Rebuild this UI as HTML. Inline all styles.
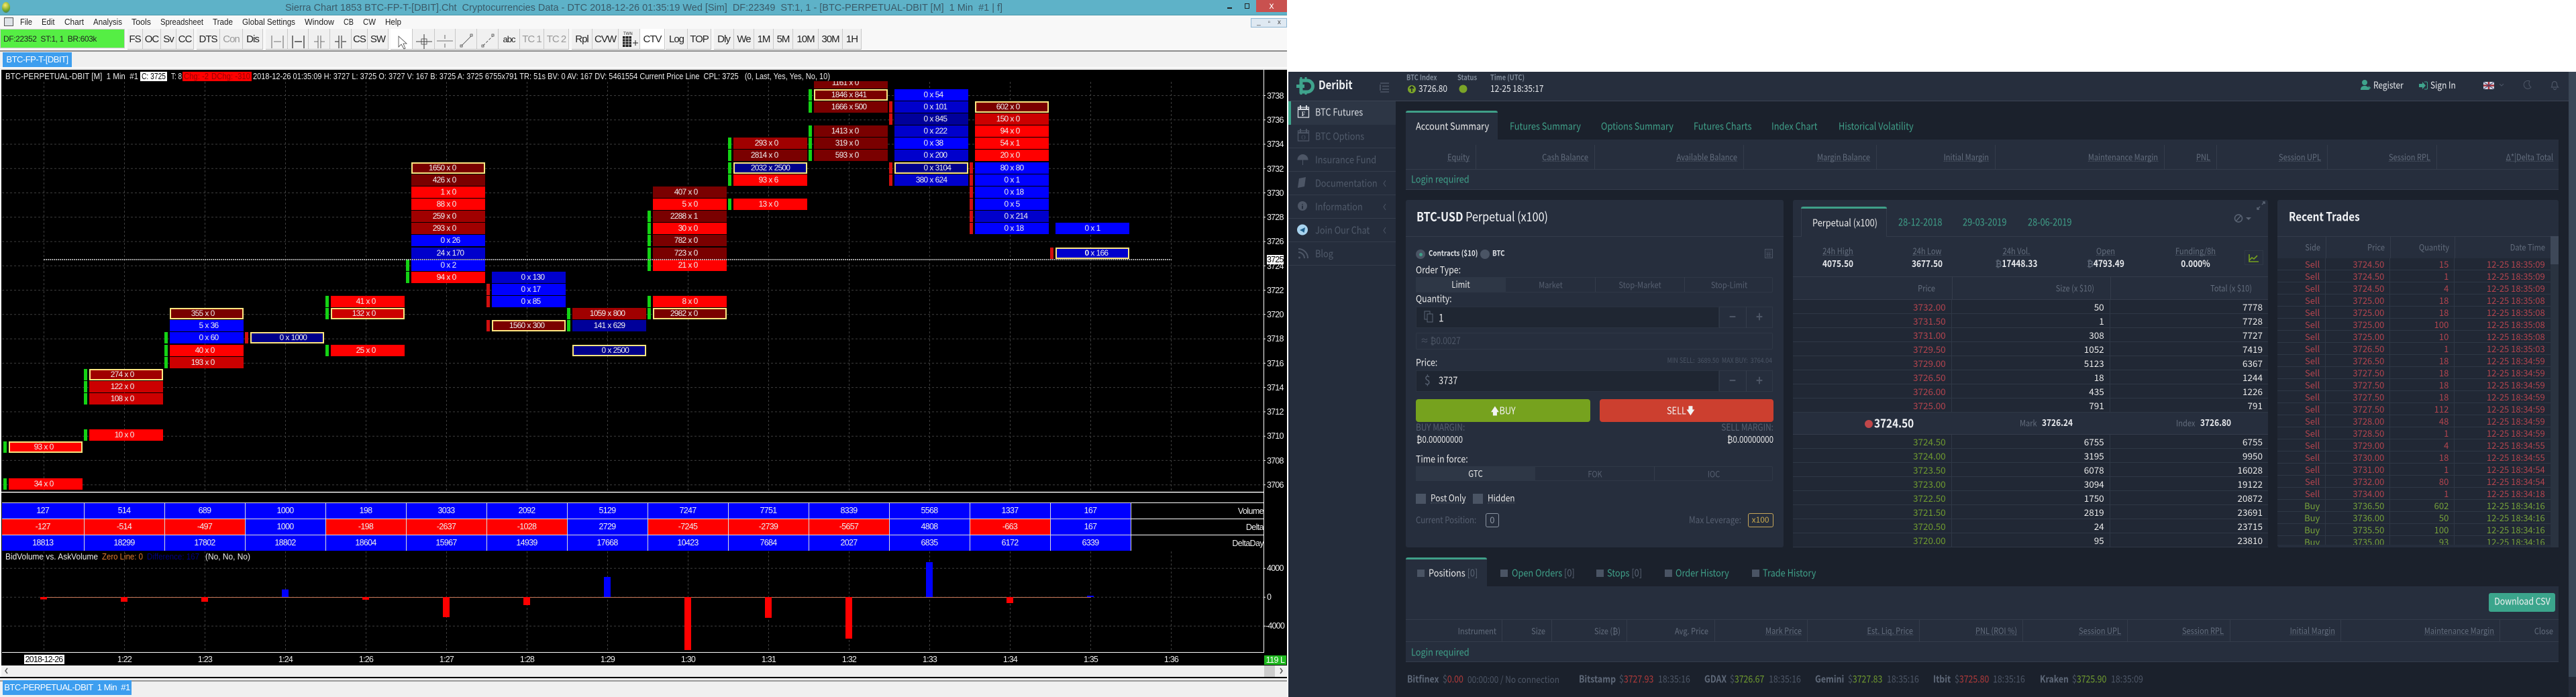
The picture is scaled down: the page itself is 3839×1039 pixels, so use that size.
<!DOCTYPE html>
<html><head><meta charset="utf-8"><title>Sierra Chart + Deribit</title>
<style>
html,body{margin:0;padding:0;background:#fff}
body{position:relative;width:3839px;height:1039px;overflow:hidden;font-family:"Liberation Sans",sans-serif}
#S{position:absolute;left:0;top:0;width:1918px;height:1039px;background:#f0f0f0;overflow:hidden}
.ab{position:absolute;left:0;top:0}
.box{position:absolute}
text{white-space:pre}
#S p{position:absolute;margin:0;width:110px;height:17px;display:flex;color:#eee;font-size:12px;letter-spacing:-.8px;line-height:17px}
#S p a{flex:1}
#S p a:first-child{text-align:right;padding-right:3px}
#S p a:last-child{text-align:left;padding-left:3px}
.g::before,.e::before{content:"";position:absolute;left:-8px;top:0;width:5px;height:17px;background:#14d214}
.e::before{background:#d20f0f}
.y{box-shadow:inset 0 0 0 2px #ffe680}
.R1{background:#f00}.R2{background:#c00}.R3{background:#a00000}.R4{background:#7a0000}
.B1{background:#00f}.B2{background:#0000cc}.B3{background:#00009a}.B4{background:#00008b}
.c0{left:13px}.c1{left:133px}.c2{left:253px}.c3{left:373px}.c4{left:493px}.c5{left:613px}.c6{left:733px}.c7{left:853px}.c8{left:973px}.c9{left:1093px}.c10{left:1213px}.c11{left:1333px}.c12{left:1453px}.c13{left:1573px}
.p38{top:133px}.p37{top:151px}.p36{top:169px}.p35{top:187px}.p34{top:205px}.p33{top:223px}.p32{top:242px}.p31{top:260px}.p30{top:278px}.p29{top:296px}.p28{top:314px}.p27{top:332px}.p26{top:350px}.p25{top:369px}.p24{top:387px}.p23{top:405px}.p22{top:423px}.p21{top:441px}.p20{top:459px}.p19{top:477px}.p18{top:495px}.p17{top:514px}.p16{top:532px}.p15{top:550px}.p14{top:568px}.p13{top:586px}.p10{top:640px}.p09{top:658px}.p06{top:713px}
.ax{position:absolute;left:1888px;color:#eee;font-size:12.5px;letter-spacing:-.8px;line-height:14px;height:14px}
.tm{position:absolute;top:976px;width:60px;text-align:center;color:#eee;font-size:12.5px;letter-spacing:-.8px;line-height:14px}
#tb{position:absolute;left:0;top:43px;width:1918px;height:32px;background:#f8f8f8}
#tb div{position:absolute;top:0;height:31px;background:#f0f0f0;border-right:1px solid #c8c8c8;border-bottom:1px solid #bbb;box-sizing:border-box;text-align:center;font-size:15px;line-height:32px;letter-spacing:-1px;color:#222;overflow:hidden}
#tb .w{color:#999}
#grid{position:absolute;left:3px;top:749px;width:1680px;display:grid;grid-template-columns:122.5px repeat(13,120px);grid-auto-rows:24px}
#grid i{font-style:normal;background:#00f;color:#eee;text-align:center;font-size:12.5px;letter-spacing:-.7px;line-height:23px;border-right:1px solid #ddd;border-top:1px solid #ddd;box-sizing:border-box}
#grid i.n{background:#f00}
#D{font-family:"Noto Sans CJK JP","Liberation Sans",sans-serif;color:#e6e8ec}
.t,.tr,.tc{position:absolute;white-space:nowrap;line-height:1}
.t{transform-origin:0 50%;transform:translate(0,-58%) scaleX(.85)}
.tr{transform-origin:100% 50%;transform:translate(-100%,-58%) scaleX(.85)}
.tc{transform-origin:50% 50%;transform:translate(-50%,-58%) scaleX(.85)}
.pa{position:absolute;background:#262e3d}
.ln{position:absolute;background:#343c4b}
.lb{color:#626c7c;font-size:13px}
.u{border-bottom:1px dotted #5a6474}
.tl{color:#3f9f88;font-size:15px}
.wh{color:#e8e8e8;font-size:15px}
.gy{color:#565f70;font-size:13px}
.sb{color:#505a6a;font-size:15px}
#ob{position:absolute;left:2672px;top:446.7px;width:708px;font-size:13.5px;background:#212835}
.ro{display:grid;grid-template-columns:236.7px 236px 235.3px;height:21px;box-sizing:border-box;border-bottom:1px solid #2f3846;line-height:20px;text-align:right;color:#e8e8e8}
.ro span{padding-right:8px;border-right:1px solid #2f3846;box-sizing:border-box}
.ro span:last-child{border-right:0}
.ro.rd span:first-child{color:#b2444e}.ro.gn span:first-child{color:#6f9a2f}
#rt{position:absolute;left:3394px;top:385.3px;width:406.7px;height:426.4px;overflow:hidden;background:#212835;font-size:13px}
.rr{display:grid;grid-template-columns:72.3px 96px 96px 142.4px;height:18px;box-sizing:border-box;border-bottom:1px solid #2f3846;line-height:17px;text-align:right}
.rr span{padding-right:8px;border-right:1px solid #2f3846;box-sizing:border-box}
.rr span:last-child{border-right:0}
.rr.s{color:#b2444e}.rr.b{color:#76a03a}
.fb{font-weight:700;color:#5e6878;font-size:14.5px}
.fg{color:#4d5666;font-size:14.5px}
</style></head><body>

<div id="S">
<div class="box" style="left:0;top:0;width:1918px;height:22px;background:#5eb2c8"></div>
<div class="box" style="left:0;top:22px;width:1918px;height:1px;background:#4a97aa"></div>
<div class="box" style="left:3px;top:3px;width:12px;height:16px;border-radius:50%;background:radial-gradient(circle at 40% 30%,#ffe96a,#6fa52a 60%,#2f6a7a)"></div>
<div class="box" style="left:0;top:23px;width:1918px;height:20px;background:#f8f8f8"></div>
<div class="box" style="left:1872px;top:0;width:46px;height:18px;background:#c9514f;color:#fff;text-align:center;font-size:14px;line-height:17px">x</div>
<div class="box" style="left:1829px;top:11px;width:7px;height:2px;background:#222"></div>
<div class="box" style="left:1855px;top:5px;width:7px;height:8px;border:1px solid #222;box-sizing:border-box"></div>
<div class="box" style="left:1864px;top:27px;width:54px;height:14px;background:#dfe9f2;border:1px solid #8fb7d4;box-sizing:border-box;color:#444;font-size:10px;line-height:12px;word-spacing:8px;text-align:center">_ &#9643; x</div>
<div class="box" style="left:6px;top:26px;width:14px;height:13px;background:#dfe3e8;border:1px solid #555;box-sizing:border-box"></div>

<div id="tb">
<div style="left:0;width:186px;height:29px;background:#55ee44;border:1px solid #ccc;text-align:left;padding-left:4px;font-size:12px;line-height:28px;letter-spacing:-.4px">DF:22352&nbsp; ST:1, 1&nbsp; BR:603k</div>
<div style="left:190px;width:23px">FS</div><div style="left:213px;width:27px">OC</div><div style="left:240px;width:23px">Sv</div><div style="left:263px;width:26px">CC</div>
<div style="left:293px;width:35px">DTS</div><div class="w" style="left:328px;width:34px">Con</div><div style="left:362px;width:30px">Dis</div>
<div style="left:396px;width:33px"></div><div style="left:429px;width:31px"></div><div style="left:460px;width:32px"></div><div style="left:492px;width:32px"></div>
<div style="left:524px;width:24px">CS</div><div style="left:548px;width:31px">SW</div>
<div style="left:582px;width:33px;background:#fff"></div><div style="left:615px;width:33px"></div><div style="left:648px;width:31px"></div><div style="left:679px;width:32px"></div><div style="left:711px;width:32px"></div>
<div style="left:743px;width:32px;font-size:13px">abc</div><div class="w" style="left:775px;width:36px">TC 1</div><div class="w" style="left:811px;width:37px">TC 2</div>
<div style="left:852px;width:31px">Rpl</div><div style="left:883px;width:39px">CVW</div><div style="left:922px;width:32px"></div>
<div style="left:954px;width:37px;background:#fff">CTV</div><div style="left:992px;width:33px">Log</div><div style="left:1025px;width:35px">TOP</div>
<div style="left:1064px;width:30px">Dly</div><div style="left:1094px;width:30px">We</div><div style="left:1124px;width:29px">1M</div><div style="left:1153px;width:29px">5M</div><div style="left:1182px;width:38px">10M</div><div style="left:1220px;width:36px">30M</div><div style="left:1256px;width:28px">1H</div>
</div>
<svg class="ab" width="1918" height="80" style="pointer-events:none">
<g fill="none" stroke="#444" stroke-width=".8">
<path d="M405 53v19M422 53v19M408 62h11"/>
<path d="M436 53v19M453 53v19M439 62h11" stroke-width="1.4"/>
<path d="M468 62h6M478 62h6M474 53v19M478 53v19"/>
<path d="M499 62h6M510 62h6M505 53v19M509 53v19" stroke-width="1.2"/>
<path d="M594 54l0 16 4-4 4 7 2-1-3-7h5z"/>
<path d="M620 62h24M632 51v22" stroke-width="1.1"/><rect x="628" y="58" width="8" height="8"/>
<path d="M651 61h24M663 52v6M663 71v-6"/>
<path d="M688 68l14-14"/><rect x="686" y="67" width="3" height="3"/><rect x="701" y="51" width="3" height="3"/>
<path d="M720 68l14-14" stroke-dasharray="4 2"/><rect x="718" y="67" width="3" height="3"/><rect x="733" y="51" width="3" height="3"/>
</g>
<rect x="928" y="54" width="13" height="16" fill="#222"/><path d="M928 58h13M928 62h13M928 66h13M932 54v16M937 54v16" stroke="#fff" stroke-width=".8"/>
<path d="M943 64h8M947 60v8" stroke="#222"/>
<text x="929" y="52" font-size="6" fill="#222">TWN</text>
<g font-size="14" fill="#3a5a68" font-family="Liberation Sans,sans-serif"><text x="425" y="16" font-size="15" textLength="1069" lengthAdjust="spacingAndGlyphs">Sierra Chart 1853 BTC-FP-T-[DBIT].Cht  Cryptocurrencies Data - DTC 2018-12-26 01:35:19 Wed [Sim]  DF:22349  ST:1, 1 - [BTC-PERPETUAL-DBIT [M]  1 Min  #1 | f]</text></g>
<g font-size="13" fill="#222" font-family="Liberation Sans,sans-serif">
<text x="30" y="37" textLength="18" lengthAdjust="spacingAndGlyphs">File</text><text x="62" y="37" textLength="19.5" lengthAdjust="spacingAndGlyphs">Edit</text><text x="96" y="37" textLength="29" lengthAdjust="spacingAndGlyphs">Chart</text><text x="139" y="37" textLength="43" lengthAdjust="spacingAndGlyphs">Analysis</text><text x="196" y="37" textLength="29" lengthAdjust="spacingAndGlyphs">Tools</text><text x="239" y="37" textLength="64" lengthAdjust="spacingAndGlyphs">Spreadsheet</text><text x="317" y="37" textLength="30" lengthAdjust="spacingAndGlyphs">Trade</text><text x="361" y="37" textLength="79" lengthAdjust="spacingAndGlyphs">Global Settings</text><text x="454" y="37" textLength="44" lengthAdjust="spacingAndGlyphs">Window</text><text x="512" y="37" textLength="15" lengthAdjust="spacingAndGlyphs">CB</text><text x="541" y="37" textLength="19" lengthAdjust="spacingAndGlyphs">CW</text><text x="574" y="37" textLength="24" lengthAdjust="spacingAndGlyphs">Help</text>
</g>
</svg>
<div class="box" style="left:0;top:75px;width:1918px;height:2px;background:#8c8c8c"></div>
<div class="box" style="left:0;top:77px;width:1918px;height:27px;background:#f0f0f0"></div>
<div class="box" style="left:0;top:100px;width:1918px;height:1px;background:#fff"></div>
<div class="box" style="left:4px;top:78px;width:103px;height:22px;background:#3d9eef;color:#fff;font-size:13px;line-height:22px;text-align:center;letter-spacing:-.5px">BTC-FP-T-[DBIT]</div>

<!-- chart -->
<div class="box" style="left:0;top:104px;width:1918px;height:888px;background:#000;border-left:2px solid #fff;box-sizing:border-box"></div>
<svg class="ab" width="1918" height="1000" style="pointer-events:none">
<g fill="none" stroke="#3e3e3e" stroke-width="1" stroke-dasharray="3 3">
<path d="M3 142.5H1883M3 178.8H1883M3 215H1883M3 251.3H1883M3 287.5H1883M3 323.8H1883M3 360.1H1883M3 396.3H1883M3 432.6H1883M3 468.8H1883M3 505.1H1883M3 541.4H1883M3 577.6H1883M3 613.9H1883M3 650.2H1883M3 686.4H1883M3 722.7H1883M3 847.3H1883M3 890.3H1883M3 933.3H1883"/>
<path d="M65.5 122V733M185.5 122V733M305.5 122V733M425.5 122V733M545.5 122V733M665.5 122V733M785.5 122V733M905.5 122V733M1025.5 122V733M1145.5 122V733M1265.5 122V733M1385.5 122V733M1505.5 122V733M1625.5 122V733M1745.5 122V733"/>
<path d="M65.5 822V972M185.5 822V972M305.5 822V972M425.5 822V972M545.5 822V972M665.5 822V972M785.5 822V972M905.5 822V972M1025.5 822V972M1145.5 822V972M1265.5 822V972M1385.5 822V972M1505.5 822V972M1625.5 822V972M1745.5 822V972"/>
</g>
</svg>

<p class="c0 p09 R1 y g"><a>93</a>x<a>0</a></p><p class="c0 p06 R1 g"><a>34</a>x<a>0</a></p>
<p class="c1 p15 R3 y g"><a>274</a>x<a>0</a></p><p class="c1 p14 R2 g"><a>122</a>x<a>0</a></p><p class="c1 p13 R2 g"><a>108</a>x<a>0</a></p><p class="c1 p10 R1 g"><a>10</a>x<a>0</a></p>
<p class="c2 p20 R4 y"><a>355</a>x<a>0</a></p><p class="c2 p19 B1"><a>5</a>x<a>36</a></p><p class="c2 p18 B1 g"><a>0</a>x<a>60</a></p><p class="c2 p17 R1 g"><a>40</a>x<a>0</a></p><p class="c2 p16 R2 g"><a>193</a>x<a>0</a></p>
<p class="c3 p18 B4 y e"><a>0</a>x<a>1000</a></p>
<p class="c4 p21 R1 g"><a>41</a>x<a>0</a></p><p class="c4 p20 R2 y g"><a>132</a>x<a>0</a></p><p class="c4 p17 R1 g"><a>25</a>x<a>0</a></p>
<p class="c5 p32 R4 y"><a>1650</a>x<a>0</a></p><p class="c5 p31 R4"><a>426</a>x<a>0</a></p><p class="c5 p30 R1"><a>1</a>x<a>0</a></p><p class="c5 p29 R1"><a>88</a>x<a>0</a></p><p class="c5 p28 R3"><a>259</a>x<a>0</a></p><p class="c5 p27 R3"><a>293</a>x<a>0</a></p><p class="c5 p26 B1"><a>0</a>x<a>26</a></p><p class="c5 p25 B2"><a>24</a>x<a>170</a></p><p class="c5 p24 B1 g"><a>0</a>x<a>2</a></p><p class="c5 p23 R1 g"><a>94</a>x<a>0</a></p>
<p class="c6 p23 B2"><a>0</a>x<a>130</a></p><p class="c6 p22 B1 e"><a>0</a>x<a>17</a></p><p class="c6 p21 B1 e"><a>0</a>x<a>85</a></p><p class="c6 p19 R4 y e"><a>1560</a>x<a>300</a></p>
<p class="c7 p20 R3 g"><a>1059</a>x<a>800</a></p><p class="c7 p19 B3 g"><a>141</a>x<a>629</a></p><p class="c7 p17 B4 y"><a>0</a>x<a>2500</a></p>
<p class="c8 p30 R4"><a>407</a>x<a>0</a></p><p class="c8 p29 R1"><a>5</a>x<a>0</a></p><p class="c8 p28 R4 g"><a>2288</a>x<a>1</a></p><p class="c8 p27 R1 g"><a>30</a>x<a>0</a></p><p class="c8 p26 R4 g"><a>782</a>x<a>0</a></p><p class="c8 p25 R4 g"><a>723</a>x<a>0</a></p><p class="c8 p24 R1 g"><a>21</a>x<a>0</a></p><p class="c8 p21 R1 g"><a>8</a>x<a>0</a></p><p class="c8 p20 R4 y g"><a>2982</a>x<a>0</a></p>
<p class="c9 p34 R3 g"><a>293</a>x<a>0</a></p><p class="c9 p33 R4 g"><a>2814</a>x<a>0</a></p><p class="c9 p32 B4 y g"><a>2032</a>x<a>2500</a></p><p class="c9 p31 R1 g"><a>93</a>x<a>6</a></p><p class="c9 p29 R1 g"><a>13</a>x<a>0</a></p>
<p class="c10 R4" style="top:115px;clip-path:inset(6px 0 0 0)"><a>1161</a>x<a>0</a></p><p class="c10 p38 R4 y g"><a>1846</a>x<a>841</a></p><p class="c10 p37 R4 g"><a>1666</a>x<a>500</a></p><p class="c10 p35 R4 g"><a>1413</a>x<a>0</a></p><p class="c10 p34 R4 g"><a>319</a>x<a>0</a></p><p class="c10 p33 R4 g"><a>593</a>x<a>0</a></p>
<p class="c11 p38 B1"><a>0</a>x<a>54</a></p><p class="c11 p37 B2 e"><a>0</a>x<a>101</a></p><p class="c11 p36 B3 e"><a>0</a>x<a>845</a></p><p class="c11 p35 B2"><a>0</a>x<a>222</a></p><p class="c11 p34 B1"><a>0</a>x<a>38</a></p><p class="c11 p33 B2"><a>0</a>x<a>200</a></p><p class="c11 p32 B4 y e"><a>0</a>x<a>3104</a></p><p class="c11 p31 B2 e"><a>380</a>x<a>624</a></p>
<p class="c12 p37 R4 y"><a>602</a>x<a>0</a></p><p class="c12 p36 R2"><a>150</a>x<a>0</a></p><p class="c12 p35 R1"><a>94</a>x<a>0</a></p><p class="c12 p34 R1"><a>54</a>x<a>1</a></p><p class="c12 p33 R1"><a>20</a>x<a>0</a></p><p class="c12 p32 B1 e"><a>80</a>x<a>80</a></p><p class="c12 p31 B1 e"><a>0</a>x<a>1</a></p><p class="c12 p30 B1 e"><a>0</a>x<a>18</a></p><p class="c12 p29 B1 e"><a>0</a>x<a>5</a></p><p class="c12 p28 B2 e"><a>0</a>x<a>214</a></p><p class="c12 p27 B1 e"><a>0</a>x<a>18</a></p>
<p class="c13 p27 B1"><a>0</a>x<a>1</a></p><p class="c13 p25 B2 y e"><a><b>0</b></a>x<a>166</a></p>

<svg class="ab" width="1918" height="1000" style="pointer-events:none">
<path d="M65 387H1746" stroke="#fff" stroke-width="1.2" stroke-dasharray="2 1" fill="none"/>
<rect x="2" y="733" width="1881" height="1.4" fill="#fff"/>
<rect x="3" y="972" width="1880" height="1" fill="#fff"/>
<rect x="1883" y="104" width="1" height="869" fill="#fff"/>
<path d="M1884 142.5h2M1884 178.8h2M1884 215h2M1884 251.3h2M1884 287.5h2M1884 323.8h2M1884 360.1h2M1884 396.3h2M1884 432.6h2M1884 468.8h2M1884 505.1h2M1884 541.4h2M1884 577.6h2M1884 613.9h2M1884 650.2h2M1884 686.4h2M1884 722.7h2M1884 847.3h2M1884 890.3h2M1884 933.3h2" stroke="#fff"/>
<g font-family="Liberation Sans,sans-serif" font-size="12.5">
<text x="8" y="118" fill="#eee" textLength="198" lengthAdjust="spacingAndGlyphs">BTC-PERPETUAL-DBIT [M]  1 Min  #1</text>
<rect x="209" y="107" width="40" height="14" fill="#fff"/>
<text x="211" y="118" fill="#000" textLength="36" lengthAdjust="spacingAndGlyphs">C: 3725</text>
<text x="255" y="118" fill="#eee" textLength="16" lengthAdjust="spacingAndGlyphs">T: 8</text>
<rect x="272" y="107" width="103" height="14" fill="#f00"/>
<text x="274" y="118" fill="#900" textLength="37" lengthAdjust="spacingAndGlyphs">Chg: -2</text>
<text x="315" y="118" fill="#900" textLength="58" lengthAdjust="spacingAndGlyphs">DChg: -310</text>
<text x="377" y="118" fill="#eee" textLength="860" lengthAdjust="spacingAndGlyphs">2018-12-26 01:35:09 H: 3727 L: 3725 O: 3727 V: 167 B: 3725 A: 3725 6755x791 TR: 51s BV: 0 AV: 167 DV: 5461554 Current Price Line  CPL: 3725   (0, Last, Yes, Yes, No, 10)</text>
<text x="8" y="834" fill="#eee" textLength="138" lengthAdjust="spacingAndGlyphs">BidVolume vs. AskVolume</text>
<text x="152" y="834" fill="#e07b30" textLength="61" lengthAdjust="spacingAndGlyphs">Zero Line: 0</text>
<text x="219" y="834" fill="#000080" textLength="78" lengthAdjust="spacingAndGlyphs">Difference: 167</text>
<text x="306" y="834" fill="#eee" textLength="67" lengthAdjust="spacingAndGlyphs">(No, No, No)</text>
<text x="1883" y="766" fill="#eee" text-anchor="end" letter-spacing="-.6">Volume</text>
<text x="1883" y="790" fill="#eee" text-anchor="end" letter-spacing="-.6">Delta</text>
<text x="1883" y="814" fill="#eee" text-anchor="end" letter-spacing="-.6">DeltaDay</text>
</g>
<rect x="3" y="749" width="1880" height="1" fill="#fff"/><rect x="3" y="773" width="1880" height="1" fill="#fff"/><rect x="3" y="797" width="1880" height="1" fill="#fff"/>
<path d="M65 890.5H1626" stroke="#c87858" stroke-width="1"/>
<g fill="#f00"><rect x="60" y="890" width="10" height="3.5"/><rect x="180" y="890" width="10" height="7"/><rect x="300" y="890" width="10" height="7"/><rect x="540" y="890" width="10" height="4"/><rect x="660" y="890" width="10" height="30"/><rect x="780" y="890" width="10" height="12"/><rect x="1020" y="890" width="10" height="79"/><rect x="1140" y="890" width="10" height="31"/><rect x="1260" y="890" width="10" height="62"/><rect x="1500" y="890" width="10" height="9"/></g>
<g fill="#00f"><rect x="420" y="878.7" width="10" height="11.3"/><rect x="900" y="860" width="10" height="30"/><rect x="1380" y="838" width="10" height="52"/><rect x="1620" y="888" width="10" height="2"/></g>
</svg>

<div id="grid">
<i>127</i><i>514</i><i>689</i><i>1000</i><i>198</i><i>3033</i><i>2092</i><i>5129</i><i>7247</i><i>7751</i><i>8339</i><i>5568</i><i>1337</i><i>167</i>
<i class="n">-127</i><i class="n">-514</i><i class="n">-497</i><i>1000</i><i class="n">-198</i><i class="n">-2637</i><i class="n">-1028</i><i>2729</i><i class="n">-7245</i><i class="n">-2739</i><i class="n">-5657</i><i>4808</i><i class="n">-663</i><i>167</i>
<i>18813</i><i>18299</i><i>17802</i><i>18802</i><i>18604</i><i>15967</i><i>14939</i><i>17668</i><i>10423</i><i>7684</i><i>2027</i><i>6835</i><i>6172</i><i>6339</i>
</div>

<div class="ax" style="top:135.5px">3738</div><div class="ax" style="top:172px">3736</div><div class="ax" style="top:208px">3734</div><div class="ax" style="top:244.5px">3732</div><div class="ax" style="top:280.5px">3730</div><div class="ax" style="top:317px">3728</div><div class="ax" style="top:353px">3726</div><div class="ax" style="top:389.5px">3724</div>
<div class="ax" style="top:380px;background:#fff;color:#000;width:25px">3725</div>
<div class="ax" style="top:425.5px">3722</div><div class="ax" style="top:462px">3720</div><div class="ax" style="top:498px">3718</div><div class="ax" style="top:534.5px">3716</div><div class="ax" style="top:570.5px">3714</div><div class="ax" style="top:607px">3712</div><div class="ax" style="top:643px">3710</div><div class="ax" style="top:679.5px">3708</div><div class="ax" style="top:715.5px">3706</div>
<div class="ax" style="top:840px">4000</div><div class="ax" style="top:883px">0</div><div class="ax" style="top:926px;left:1886px">-4000</div>

<div class="tm" style="left:35.5px;width:60px;background:#fff;color:#000">2018-12-26</div>
<div class="tm" style="left:155.5px">1:22</div><div class="tm" style="left:275.5px">1:23</div><div class="tm" style="left:395.5px">1:24</div><div class="tm" style="left:515.5px">1:26</div><div class="tm" style="left:635.5px">1:27</div><div class="tm" style="left:755.5px">1:28</div><div class="tm" style="left:875.5px">1:29</div><div class="tm" style="left:995.5px">1:30</div><div class="tm" style="left:1115.5px">1:31</div><div class="tm" style="left:1235.5px">1:32</div><div class="tm" style="left:1355.5px">1:33</div><div class="tm" style="left:1475.5px">1:34</div><div class="tm" style="left:1595.5px">1:35</div><div class="tm" style="left:1715.5px">1:36</div>
<div class="box" style="left:1884px;top:977px;width:33px;height:14px;background:#1fb81f;color:#fff;font-size:12.5px;line-height:14px;text-align:center;letter-spacing:-.5px">119 L</div>

<div class="box" style="left:0;top:992px;width:1918px;height:17px;background:#f0f0f0;border-left:2px solid #fff;box-sizing:border-box"></div>
<div class="box" style="left:1884px;top:992px;width:16px;height:17px;background:#cdcdcd"></div>
<svg class="ab" width="1918" height="1039" style="pointer-events:none"><path d="M11 996l-3 4 3 4M1908 996l3 4-3 4" fill="none" stroke="#555" stroke-width="1.5"/></svg>
<div class="box" style="left:0;top:1009px;width:1918px;height:2px;background:#000"></div>
<div class="box" style="left:0;top:1014px;width:1918px;height:2px;background:#9a9a9a"></div>
<div class="box" style="left:4px;top:1014px;width:192px;height:22px;background:#3d9eef;color:#fff;font-size:13px;line-height:22px;text-align:center;letter-spacing:-.5px;white-space:pre">BTC-PERPETUAL-DBIT  1 Min  #1</div>
</div>

<!-- Deribit -->
<div id="D">
<div class="box" style="left:1920px;top:107px;width:1908px;height:932px;background:#1b212c"></div>
<div class="box" style="left:1920px;top:107px;width:160px;height:932px;background:#252d3c"></div>
<div class="box" style="left:1920px;top:107px;width:1908px;height:43px;background:#262e3d"></div>
<div class="box" style="left:1920px;top:150px;width:1908px;height:1px;background:#3c4454"></div>
<div class="box" style="left:3828px;top:107px;width:11px;height:902px;background:#3a4656"></div>
<div class="box" style="left:3828px;top:1009px;width:11px;height:30px;background:#252b38"></div>

<svg class="ab" width="3839" height="400" style="pointer-events:none;z-index:2">
<path d="M1939 120h9a8.500 8.500 0 0 1 0 17h-9z" fill="none" stroke="#3fa38c" stroke-width="5"/>
<path d="M1932 128.500h12" stroke="#3fa38c" stroke-width="5"/>
<path d="M1939 115v5M1946 115v5M1939 137v4M1946 137v4" stroke="#3fa38c" stroke-width="3"/>
<path d="M2057 124h13M2060 128.500h10M2060 133h10M2057 137h13M2057 126v9" stroke="#4d5666" stroke-width="1.600" fill="none"/>
<circle cx="2104" cy="133" r="6" fill="#7ba428"/><path d="M2104 137v-7M2101 132l3-3 3 3" stroke="#1b212c" stroke-width="1.600" fill="none"/>
<circle cx="2180.500" cy="132.500" r="6" fill="#7ba428"/>
<g fill="none" stroke="#d6dae0" stroke-width="1.300"><rect x="1934.500" y="160" width="16" height="15"/><path d="M1938 157v5M1947 157v5M1934.500 163h16" stroke-width="2"/></g>
<text x="1942.500" y="173" font-size="9" font-weight="700" fill="#d6dae0" text-anchor="middle" font-family="Liberation Serif,serif">F</text>
<g fill="none" stroke="#4d5666" stroke-width="1.300"><rect x="1934.500" y="195" width="16" height="15"/><path d="M1938 192v5M1947 192v5M1934.500 198h16" stroke-width="2"/></g>
<text x="1942.500" y="208" font-size="9" fill="#4d5666" text-anchor="middle" font-family="Liberation Serif,serif">O</text>
<path d="M1934 238a7.500 7.500 0 0 1 15 0zM1941.500 238v8" fill="#4d5666" stroke="#4d5666"/>
<path d="M1936 266l10-2-2 14-10 2z" fill="#4d5666"/>
<circle cx="1941" cy="307" r="7" fill="#4d5666"/><path d="M1941 304v1M1941 306.500v5" stroke="#252d3c" stroke-width="2"/>
<circle cx="1941" cy="342.500" r="8" fill="#a9d4ef"/><path d="M1937 343l8-4-1.500 8-2.500-2z" fill="#1f5f8c"/>
<path d="M1935 371a14 14 0 0 1 14 14M1935 376a9 9 0 0 1 9 9" fill="none" stroke="#4d5666" stroke-width="2"/><circle cx="1936.500" cy="384" r="1.500" fill="#4d5666"/>
<path d="M2065 269l-3 4.500 3 4.500M2065 304l-3 4.500 3 4.500M2065 339l-3 4.500 3 4.500" fill="none" stroke="#4d5666"/>
<circle cx="3524" cy="123" r="4" fill="#3fa38c"/><path d="M3518 134c0-5 3-6 6-6s6 1 6 6z" fill="#3fa38c"/><path d="M3528 131h5M3530.500 128.500v5" stroke="#3fa38c" stroke-width="1.500"/>
<path d="M3605 125h5v-3l5 5.500-5 5.500v-3h-5z" fill="#3fa38c"/><path d="M3613 122h3a1.500 1.500 0 0 1 1.500 1.500v8a1.500 1.500 0 0 1-1.500 1.500h-3" fill="none" stroke="#3fa38c"/>
<rect x="3701" y="122" width="16" height="11" fill="#d8d8e4"/><path d="M3701 127.500h16M3709 122v11" stroke="#a8323c" stroke-width="2.500"/><path d="M3701 122l16 11M3717 122l-16 11" stroke="#39406c" stroke-width="1"/>
<path d="M3725 125l3 3 3-3" fill="none" stroke="#4d5666"/>
<path d="M3770 121a6 6 0 1 0 2 9 6.500 6.500 0 0 1-2-9z" fill="none" stroke="#4d5666"/>
<path d="M3803 131c1-2 1-3 1-5a3.500 3.500 0 0 1 7 0c0 2 0 3 2 5zM3806 132.500a2 2 0 0 0 4 0" fill="none" stroke="#4d5666" stroke-width="1.200" transform="translate(-.5,-1)"/>
</svg>

<span class="t" style="left:1965px;top:128px;font-size:17.5px;font-weight:700;color:#eef0f3">Deribit</span>
<span class="t" style="left:2096px;top:117px;font-size:11px;font-weight:700;color:#7f8a99">BTC Index</span>
<span class="t" style="left:2114px;top:133px;font-size:14px;color:#e6e8ec">3726.80</span>
<span class="t" style="left:2172px;top:117px;font-size:11px;font-weight:700;color:#7f8a99">Status</span>
<span class="t" style="left:2221px;top:117px;font-size:11px;font-weight:700;color:#7f8a99">Time (UTC)</span>
<span class="t" style="left:2221px;top:133px;font-size:14px;color:#e6e8ec">12-25 18:35:17</span>
<span class="t" style="left:3537px;top:128px;font-size:14px;color:#e6e8ec">Register</span>
<span class="t" style="left:3622px;top:128px;font-size:14px;color:#e6e8ec">Sign In</span>

<div class="box" style="left:1920px;top:151px;width:160px;height:35px;background:#2d3645;border-left:4px solid #3ca58c;box-sizing:border-box"></div>
<div class="ln" style="left:1920px;top:220px;width:160px;height:1px"></div><div class="ln" style="left:1920px;top:255px;width:160px;height:1px"></div><div class="ln" style="left:1920px;top:290px;width:160px;height:1px"></div><div class="ln" style="left:1920px;top:325px;width:160px;height:1px"></div><div class="ln" style="left:1920px;top:360px;width:160px;height:1px"></div><div class="ln" style="left:1920px;top:395px;width:160px;height:1px"></div>
<span class="t" style="left:1960px;top:168px;font-size:15px;color:#d6dae0">BTC Futures</span>
<span class="t sb" style="left:1960px;top:204px">BTC Options</span>
<span class="t sb" style="left:1960px;top:239px">Insurance Fund</span>
<span class="t sb" style="left:1960px;top:274px">Documentation</span>
<span class="t sb" style="left:1960px;top:309px">Information</span>
<span class="t sb" style="left:1960px;top:344px">Join Our Chat</span>
<span class="t sb" style="left:1960px;top:379px">Blog</span>

<!-- top tabs -->
<div class="pa" style="left:2095.400px;top:165px;width:137px;height:43px"></div>
<div class="box" style="left:2095.400px;top:165px;width:137px;height:3px;background:#3f9f88;border-radius:3px 3px 0 0"></div>
<span class="t wh" style="left:2110px;top:189px">Account Summary</span>
<span class="t tl" style="left:2249.500px;top:189px">Futures Summary</span>
<span class="t tl" style="left:2385.700px;top:189px">Options Summary</span>
<span class="t tl" style="left:2523.500px;top:189px">Futures Charts</span>
<span class="t tl" style="left:2640px;top:189px">Index Chart</span>
<span class="t tl" style="left:2740px;top:189px">Historical Volatility</span>

<div class="pa" style="left:2095.400px;top:207.700px;width:1717.600px;height:75px;border-bottom:1px solid #343c4b;box-sizing:border-box"></div>
<div class="ln" style="left:2095.400px;top:251.700px;width:1717.600px;height:1px"></div>
<div class="ln" style="left:2198.500px;top:216px;width:1px;height:36px"></div><div class="ln" style="left:2375.500px;top:216px;width:1px;height:36px"></div><div class="ln" style="left:2597.500px;top:216px;width:1px;height:36px"></div><div class="ln" style="left:2795.700px;top:216px;width:1px;height:36px"></div><div class="ln" style="left:2972.600px;top:216px;width:1px;height:36px"></div><div class="ln" style="left:3224.700px;top:216px;width:1px;height:36px"></div><div class="ln" style="left:3302.800px;top:216px;width:1px;height:36px"></div><div class="ln" style="left:3467.700px;top:216px;width:1px;height:36px"></div><div class="ln" style="left:3630.700px;top:216px;width:1px;height:36px"></div>
<span class="tr lb u" style="left:2189.800px;top:235px">Equity</span><span class="tr lb u" style="left:2366.800px;top:235px">Cash Balance</span><span class="tr lb u" style="left:2588.800px;top:235px">Available Balance</span><span class="tr lb u" style="left:2787px;top:235px">Margin Balance</span><span class="tr lb u" style="left:2964px;top:235px">Initial Margin</span><span class="tr lb u" style="left:3216px;top:235px">Maintenance Margin</span><span class="tr lb u" style="left:3294px;top:235px">PNL</span><span class="tr lb u" style="left:3459px;top:235px">Session UPL</span><span class="tr lb u" style="left:3622px;top:235px">Session RPL</span><span class="tr lb u" style="left:3805px;top:235px">Δ*|Delta Total</span>
<span class="t tl" style="left:2103px;top:268px">Login required</span>

<!-- order panel -->
<div class="pa" style="left:2095.400px;top:298px;width:562.200px;height:518px;border-radius:3px"></div>
<div class="ln" style="left:2095.400px;top:351.700px;width:562.200px;height:1px"></div>
<span class="t" style="left:2111px;top:324px;font-size:19px;color:#f0f2f5"><b>BTC-USD</b> Perpetual (x100)</span>
<div class="box" style="left:2110px;top:372px;width:14px;height:14px;border-radius:50%;background:#4a5464"></div><div class="box" style="left:2114.500px;top:376.500px;width:5px;height:5px;border-radius:50%;background:#3f9f88"></div>
<span class="t" style="left:2128.600px;top:379px;font-size:11.500px;font-weight:700;color:#dfe2e6">Contracts ($10)</span>
<div class="box" style="left:2206px;top:372px;width:14px;height:14px;border-radius:50%;background:#4a5464"></div>
<span class="t" style="left:2224px;top:379px;font-size:11.500px;font-weight:700;color:#dfe2e6">BTC</span>
<svg class="ab" width="2660" height="600" style="pointer-events:none;z-index:2"><rect x="2630.500" y="371.500" width="11" height="13" fill="none" stroke="#4d5666"/><path d="M2632 374h8M2632 377h8M2632 379.500h8M2632 382h8M2634 376v7M2637 376v7" stroke="#4d5666" stroke-width=".8"/>
<rect x="2123" y="464" width="8" height="12" fill="none" stroke="#5a6474"/><rect x="2127" y="468" width="8" height="12" fill="#1f2632" stroke="#5a6474"/>
</svg>
<span class="t wh" style="left:2110px;top:404px;font-size:14.500px">Order Type:</span>
<div class="box" style="left:2110px;top:413.300px;width:532px;height:22.400px;border:1px solid #2f3846;box-sizing:border-box;border-radius:2px"></div>
<div class="box" style="left:2110px;top:413.300px;width:134.400px;height:22.400px;background:#2e3746"></div>
<div class="ln" style="left:2376.500px;top:413.300px;width:1px;height:22px"></div><div class="ln" style="left:2509.700px;top:413.300px;width:1px;height:22px"></div>
<span class="tc" style="left:2176.500px;top:425px;font-size:13.500px;color:#e8e8e8">Limit</span><span class="tc gy" style="left:2310.700px;top:425px">Market</span><span class="tc gy" style="left:2444px;top:425px">Stop-Market</span><span class="tc gy" style="left:2576.500px;top:425px">Stop-Limit</span>
<span class="t wh" style="left:2110px;top:447px;font-size:14.500px">Quantity:</span>
<div class="box" style="left:2110px;top:456.700px;width:452px;height:32.600px;background:#1f2632;border:1px solid #2a3240;box-sizing:border-box"></div>
<div class="box" style="left:2562px;top:456.700px;width:80px;height:32.600px;border:1px solid #2f3846;box-sizing:border-box"></div>
<div class="ln" style="left:2602px;top:457px;width:1px;height:32px"></div>
<span class="tc" style="left:2582px;top:473px;font-size:20px;font-weight:700;color:#4d5666">−</span><span class="tc" style="left:2622px;top:473px;font-size:20px;font-weight:700;color:#4d5666">+</span>
<span class="t" style="left:2144px;top:474px;font-size:16px;color:#e8e8e8">1</span>
<div class="box" style="left:2110px;top:495.700px;width:532px;height:25px;border:1px solid #2f3846;box-sizing:border-box;border-radius:2px"></div>
<span class="t" style="left:2117px;top:509px;font-size:14px;color:#4d5666">≈ ₿0.0027</span>
<span class="t wh" style="left:2110px;top:542px;font-size:14.500px">Price:</span>
<span class="tr" style="left:2640.800px;top:539px;font-size:10.500px;color:#4a5464">MIN SELL:&nbsp; 3689.50&nbsp; MAX BUY:&nbsp; 3764.04</span>
<div class="box" style="left:2110px;top:551.700px;width:452px;height:32.300px;background:#1f2632;border:1px solid #2a3240;box-sizing:border-box"></div>
<div class="box" style="left:2562px;top:551.700px;width:80px;height:32.300px;border:1px solid #2f3846;box-sizing:border-box"></div>
<div class="ln" style="left:2602px;top:552px;width:1px;height:32px"></div>
<span class="tc" style="left:2582px;top:568px;font-size:20px;font-weight:700;color:#4d5666">−</span><span class="tc" style="left:2622px;top:568px;font-size:20px;font-weight:700;color:#4d5666">+</span>
<span class="t" style="left:2123px;top:568px;font-size:18px;color:#5a6474">$</span><span class="t" style="left:2144px;top:568px;font-size:15px;color:#e8e8e8">3737</span>
<div class="box" style="left:2110px;top:595px;width:260px;height:34px;background:#76a21e;border-radius:4px"></div>
<div class="box" style="left:2384px;top:595px;width:259px;height:34px;background:#cc3f2f;border-radius:4px"></div>
<span class="tc" style="left:2240px;top:612.500px;font-size:15px;color:#f2f2f2">🡅BUY</span>
<span class="tc" style="left:2505px;top:612.500px;font-size:15px;color:#f2f2f2">SELL🡇</span>
<span class="t" style="left:2110px;top:638px;font-size:14px;color:#565f70">BUY MARGIN:</span><span class="tr" style="left:2643px;top:638px;font-size:14px;color:#565f70">SELL MARGIN:</span>
<span class="t" style="left:2110.700px;top:656px;font-size:13.500px;color:#e8e8e8">₿0.00000000</span><span class="tr" style="left:2643px;top:656px;font-size:13.500px;color:#e8e8e8">₿0.00000000</span>
<span class="t wh" style="left:2110px;top:686px;font-size:14.500px">Time in force:</span>
<div class="box" style="left:2110px;top:695.300px;width:532px;height:22px;border:1px solid #2f3846;box-sizing:border-box;border-radius:2px"></div>
<div class="box" style="left:2110px;top:695.300px;width:178px;height:22px;background:#2e3746"></div><div class="ln" style="left:2465px;top:695.300px;width:1px;height:22px"></div>
<span class="tc" style="left:2199px;top:707px;font-size:13.500px;color:#e8e8e8">GTC</span><span class="tc gy" style="left:2377px;top:707px">FOK</span><span class="tc gy" style="left:2554px;top:707px">IOC</span>
<div class="box" style="left:2110px;top:736px;width:15px;height:15px;background:#4a5464"></div><div class="box" style="left:2195px;top:736px;width:15px;height:15px;background:#4a5464"></div>
<span class="t u" style="left:2132px;top:744px;font-size:14px;color:#e8e8e8">Post Only</span><span class="t u" style="left:2217px;top:744px;font-size:14px;color:#e8e8e8">Hidden</span>
<span class="t" style="left:2110px;top:776px;font-size:13.500px;color:#565f70">Current Position:</span>
<div class="box" style="left:2213.800px;top:765.300px;width:20px;height:20.700px;border:1px solid #8a93a0;box-sizing:border-box;border-radius:3px;color:#8a93a0;font-size:13px;line-height:18px;text-align:center">0</div>
<span class="t" style="left:2517px;top:776px;font-size:14px;color:#565f70">Max Leverage:</span>
<div class="box" style="left:2604.600px;top:765.300px;width:38px;height:20.700px;border:1px solid #c6a65a;box-sizing:border-box;border-radius:3px;color:#c9a94d;font-size:12px;line-height:18px;text-align:center">x100</div>

<!-- orderbook -->
<div class="pa" style="left:2672px;top:298px;width:708px;height:518px;border-radius:3px"></div>
<div class="ln" style="left:2672px;top:352px;width:708px;height:1px"></div>
<div class="pa" style="left:2684px;top:308px;width:128px;height:45px;border-right:1px solid #343c4b;border-left:1px solid #343c4b;box-sizing:border-box"></div>
<div class="box" style="left:2684px;top:308px;width:128px;height:3px;background:#3f9f88;border-radius:3px 3px 0 0"></div>
<span class="t wh" style="left:2700.700px;top:333px">Perpetual (x100)</span>
<span class="t tl" style="left:2828.700px;top:332px">28-12-2018</span><span class="t tl" style="left:2924.700px;top:332px">29-03-2019</span><span class="t tl" style="left:3021.600px;top:332px">28-06-2019</span>
<svg class="ab" width="3400" height="420" style="pointer-events:none;z-index:2">
<circle cx="3336" cy="325.500" r="5.500" fill="none" stroke="#5a6474" stroke-width="1.500"/><path d="M3332 330l8-9" stroke="#5a6474" stroke-width="1.500"/><path d="M3347 324h8l-4 4z" fill="#5a6474"/>
<path d="M3364 312l4-4M3371 305l4-4M3372 301h3v3M3367 312h-3v-3" fill="none" stroke="#5a6474" stroke-width="1.500"/>
<rect x="3345.500" y="373.500" width="27" height="21" fill="none" stroke="#2f3846"/><path d="M3352 379v11h14M3352 388l4-4 3 2 5-5" fill="none" stroke="#76a21e" stroke-width="1.600"/>
</svg>
<span class="tc lb u" style="left:2738.500px;top:374.500px">24h High</span><span class="tc lb u" style="left:2871.800px;top:374.500px">24h Low</span><span class="tc lb u" style="left:3004.600px;top:374.500px">24h Vol.</span><span class="tc lb u" style="left:3138.400px;top:374.500px">Open</span><span class="tc lb u" style="left:3272.200px;top:374.500px">Funding/8h</span>
<span class="tc" style="left:2738.500px;top:394px;font-size:14px;font-weight:700">4075.50</span><span class="tc" style="left:2871.800px;top:394px;font-size:14px;font-weight:700">3677.50</span><span class="tc" style="left:3004.600px;top:394px;font-size:14px;font-weight:700"><span style="color:#5a6474">₿</span>17448.33</span><span class="tc" style="left:3138.400px;top:394px;font-size:14px;font-weight:700"><span style="color:#5a6474">₿</span>4793.49</span><span class="tc" style="left:3272.200px;top:394px;font-size:14px;font-weight:700">0.000%</span>
<div class="ln" style="left:2672px;top:412px;width:708px;height:1px"></div>
<div class="ln" style="left:2672px;top:446px;width:708px;height:1px"></div>
<div class="ln" style="left:2908.700px;top:412px;width:1px;height:34px"></div><div class="ln" style="left:3144.700px;top:412px;width:1px;height:34px"></div>
<span class="tr lb" style="left:2884px;top:430px">Price</span><span class="tr lb" style="left:3120.500px;top:430px">Size (x $10)</span><span class="tr lb" style="left:3355.600px;top:430px">Total (x $10)</span>
<div id="ob">
<div class="ro rd"><span>3732.00</span><span>50</span><span>7778</span></div>
<div class="ro rd"><span>3731.50</span><span>1</span><span>7728</span></div>
<div class="ro rd"><span>3731.00</span><span>308</span><span>7727</span></div>
<div class="ro rd"><span>3729.50</span><span>1052</span><span>7419</span></div>
<div class="ro rd"><span>3729.00</span><span>5123</span><span>6367</span></div>
<div class="ro rd"><span>3726.50</span><span>18</span><span>1244</span></div>
<div class="ro rd"><span>3726.00</span><span>435</span><span>1226</span></div>
<div class="ro rd"><span>3725.00</span><span>791</span><span>791</span></div>
<div style="height:33px;background:#262e3d;border-bottom:1px solid #343c4b;box-sizing:border-box"></div>
<div class="ro gn"><span>3724.50</span><span>6755</span><span>6755</span></div>
<div class="ro gn"><span>3724.00</span><span>3195</span><span>9950</span></div>
<div class="ro gn"><span>3723.50</span><span>6078</span><span>16028</span></div>
<div class="ro gn"><span>3723.00</span><span>3094</span><span>19122</span></div>
<div class="ro gn"><span>3722.50</span><span>1750</span><span>20872</span></div>
<div class="ro gn"><span>3721.50</span><span>2819</span><span>23691</span></div>
<div class="ro gn"><span>3720.50</span><span>24</span><span>23715</span></div>
<div class="ro gn"><span>3720.00</span><span>95</span><span>23810</span></div>
</div>
<div class="box" style="left:2779px;top:626px;width:12px;height:12px;border-radius:50%;background:#c0474a"></div>
<span class="t" style="left:2793px;top:632px;font-size:18px;font-weight:700;color:#f0f2f5">3724.50</span>
<span class="t lb" style="left:3009.500px;top:631px">Mark</span><span class="t" style="left:3043px;top:631px;font-size:14px;font-weight:700">3726.24</span>
<span class="t lb" style="left:3242.600px;top:631px">Index</span><span class="t" style="left:3279px;top:631px;font-size:14px;font-weight:700">3726.80</span>

<!-- recent trades -->
<div class="pa" style="left:3394px;top:298px;width:419px;height:518px;border-radius:3px"></div>
<div class="ln" style="left:3394px;top:351.700px;width:419px;height:1px"></div>
<span class="t" style="left:3410.700px;top:324px;font-size:18px;font-weight:700;color:#f0f2f5">Recent Trades</span>
<div class="box" style="left:3801px;top:352px;width:12px;height:464px;background:#2a3340"></div>
<div class="box" style="left:3801px;top:352px;width:12px;height:42px;background:#3e4858"></div>
<div class="ln" style="left:3394px;top:385px;width:407px;height:1px"></div>
<div class="ln" style="left:3466.300px;top:352px;width:1px;height:33px"></div><div class="ln" style="left:3562.300px;top:352px;width:1px;height:33px"></div><div class="ln" style="left:3658.300px;top:352px;width:1px;height:33px"></div>
<span class="tr" style="left:3458px;top:369px;font-size:13px;color:#626c7c">Side</span><span class="tr" style="left:3554px;top:369px;font-size:13px;color:#626c7c">Price</span><span class="tr" style="left:3649.700px;top:369px;font-size:13px;color:#626c7c">Quantity</span><span class="tr" style="left:3793px;top:369px;font-size:13px;color:#626c7c">Date Time</span>
<div id="rt">
<div class="rr s"><span>Sell</span><span>3724.50</span><span>15</span><span>12-25 18:35:09</span></div>
<div class="rr s"><span>Sell</span><span>3724.50</span><span>1</span><span>12-25 18:35:09</span></div>
<div class="rr s"><span>Sell</span><span>3724.50</span><span>4</span><span>12-25 18:35:09</span></div>
<div class="rr s"><span>Sell</span><span>3725.00</span><span>18</span><span>12-25 18:35:08</span></div>
<div class="rr s"><span>Sell</span><span>3725.00</span><span>18</span><span>12-25 18:35:08</span></div>
<div class="rr s"><span>Sell</span><span>3725.00</span><span>100</span><span>12-25 18:35:08</span></div>
<div class="rr s"><span>Sell</span><span>3725.00</span><span>10</span><span>12-25 18:35:08</span></div>
<div class="rr s"><span>Sell</span><span>3726.50</span><span>1</span><span>12-25 18:35:03</span></div>
<div class="rr s"><span>Sell</span><span>3726.50</span><span>18</span><span>12-25 18:34:59</span></div>
<div class="rr s"><span>Sell</span><span>3727.50</span><span>18</span><span>12-25 18:34:59</span></div>
<div class="rr s"><span>Sell</span><span>3727.50</span><span>18</span><span>12-25 18:34:59</span></div>
<div class="rr s"><span>Sell</span><span>3727.50</span><span>18</span><span>12-25 18:34:59</span></div>
<div class="rr s"><span>Sell</span><span>3727.50</span><span>112</span><span>12-25 18:34:59</span></div>
<div class="rr s"><span>Sell</span><span>3728.00</span><span>48</span><span>12-25 18:34:59</span></div>
<div class="rr s"><span>Sell</span><span>3728.50</span><span>1</span><span>12-25 18:34:59</span></div>
<div class="rr s"><span>Sell</span><span>3729.00</span><span>4</span><span>12-25 18:34:55</span></div>
<div class="rr s"><span>Sell</span><span>3730.00</span><span>18</span><span>12-25 18:34:55</span></div>
<div class="rr s"><span>Sell</span><span>3731.00</span><span>1</span><span>12-25 18:34:54</span></div>
<div class="rr s"><span>Sell</span><span>3732.00</span><span>80</span><span>12-25 18:34:54</span></div>
<div class="rr s"><span>Sell</span><span>3734.00</span><span>1</span><span>12-25 18:34:18</span></div>
<div class="rr b"><span>Buy</span><span>3736.50</span><span>602</span><span>12-25 18:34:16</span></div>
<div class="rr b"><span>Buy</span><span>3736.00</span><span>50</span><span>12-25 18:34:16</span></div>
<div class="rr b"><span>Buy</span><span>3735.50</span><span>100</span><span>12-25 18:34:16</span></div>
<div class="rr b"><span>Buy</span><span>3735.00</span><span>93</span><span>12-25 18:34:16</span></div>
</div>

<!-- positions -->
<div class="pa" style="left:2095.400px;top:831px;width:120.400px;height:43px"></div>
<div class="box" style="left:2095.400px;top:831px;width:120.400px;height:3px;background:#3f9f88;border-radius:3px 3px 0 0"></div>
<div class="pa" style="left:2095.400px;top:874px;width:1717.600px;height:113.300px;border-bottom:1px solid #343c4b;box-sizing:border-box"></div>
<div class="box" style="left:2112px;top:849px;width:11px;height:11px;background:#4a5464"></div><span class="t wh" style="left:2129px;top:855px">Positions <span style="color:#5a6474">[0]</span></span>
<div class="box" style="left:2235.700px;top:849px;width:11px;height:11px;background:#4a5464"></div><span class="t tl" style="left:2252.500px;top:855px">Open Orders <span style="color:#5a6474">[0]</span></span>
<div class="box" style="left:2379px;top:849px;width:11px;height:11px;background:#4a5464"></div><span class="t tl" style="left:2395.400px;top:855px">Stops <span style="color:#5a6474">[0]</span></span>
<div class="box" style="left:2481px;top:849px;width:11px;height:11px;background:#4a5464"></div><span class="t tl" style="left:2497.400px;top:855px">Order History</span>
<div class="box" style="left:2610.700px;top:849px;width:11px;height:11px;background:#4a5464"></div><span class="t tl" style="left:2627px;top:855px">Trade History</span>
<div class="box" style="left:3709px;top:884px;width:99px;height:28px;background:#3ba58c;border-radius:3px"></div>
<span class="tc" style="left:3758.500px;top:898px;font-size:14.500px;color:#f2f2f2">Download CSV</span>
<div class="ln" style="left:2095.400px;top:922.700px;width:1717.600px;height:1px"></div><div class="ln" style="left:2095.400px;top:956.300px;width:1717.600px;height:1px"></div>
<div class="ln" style="left:2238px;top:923px;width:1px;height:33px"></div><div class="ln" style="left:2311.700px;top:923px;width:1px;height:33px"></div><div class="ln" style="left:2423.500px;top:923px;width:1px;height:33px"></div><div class="ln" style="left:2554.600px;top:923px;width:1px;height:33px"></div><div class="ln" style="left:2693.300px;top:923px;width:1px;height:33px"></div><div class="ln" style="left:2859.700px;top:923px;width:1px;height:33px"></div><div class="ln" style="left:3014.300px;top:923px;width:1px;height:33px"></div><div class="ln" style="left:3169.500px;top:923px;width:1px;height:33px"></div><div class="ln" style="left:3322.600px;top:923px;width:1px;height:33px"></div><div class="ln" style="left:3488px;top:923px;width:1px;height:33px"></div><div class="ln" style="left:3725px;top:923px;width:1px;height:33px"></div>
<span class="tr lb" style="left:2230px;top:940.500px">Instrument</span><span class="tr lb" style="left:2303px;top:940.500px">Size</span><span class="tr lb" style="left:2414.800px;top:940.500px">Size (₿)</span><span class="tr lb" style="left:2546px;top:940.500px">Avg. Price</span><span class="tr lb u" style="left:2685px;top:940.500px">Mark Price</span><span class="tr lb u" style="left:2851px;top:940.500px">Est. Liq. Price</span><span class="tr lb u" style="left:3006px;top:940.500px">PNL (ROI %)</span><span class="tr lb u" style="left:3160.700px;top:940.500px">Session UPL</span><span class="tr lb u" style="left:3314px;top:940.500px">Session RPL</span><span class="tr lb u" style="left:3480px;top:940.500px">Initial Margin</span><span class="tr lb u" style="left:3716.700px;top:940.500px">Maintenance Margin</span><span class="tr lb" style="left:3805px;top:940.500px">Close</span>
<span class="t tl" style="left:2103px;top:973px">Login required</span>

<!-- footer -->
<span class="t fb" style="left:2097.400px;top:1013.500px">Bitfinex</span><span class="t fg" style="left:2150px;top:1013.500px">$<span style="color:#b03a3a">0.00</span></span><span class="t fg" style="left:2187px;top:1013.500px;font-size:14px">00:00:00 / No connection</span>
<span class="t fb" style="left:2352.500px;top:1013.500px">Bitstamp</span><span class="t fg" style="left:2413px;top:1013.500px">$<span style="color:#b03a3a">3727.93</span></span><span class="t fg" style="left:2471px;top:1013.500px">18:35:16</span>
<span class="t fb" style="left:2539.800px;top:1013.500px">GDAX</span><span class="t fg" style="left:2578px;top:1013.500px">$<span style="color:#6f9a2f">3726.67</span></span><span class="t fg" style="left:2635.700px;top:1013.500px">18:35:16</span>
<span class="t fb" style="left:2705px;top:1013.500px">Gemini</span><span class="t fg" style="left:2754px;top:1013.500px">$<span style="color:#6f9a2f">3727.83</span></span><span class="t fg" style="left:2811.700px;top:1013.500px">18:35:16</span>
<span class="t fb" style="left:2880.500px;top:1013.500px">Itbit</span><span class="t fg" style="left:2913px;top:1013.500px">$<span style="color:#b03a3a">3725.80</span></span><span class="t fg" style="left:2970px;top:1013.500px">18:35:16</span>
<span class="t fb" style="left:3039.500px;top:1013.500px">Kraken</span><span class="t fg" style="left:3088px;top:1013.500px">$<span style="color:#6f9a2f">3725.90</span></span><span class="t fg" style="left:3145.700px;top:1013.500px">18:35:09</span>
</div>
</body></html>
